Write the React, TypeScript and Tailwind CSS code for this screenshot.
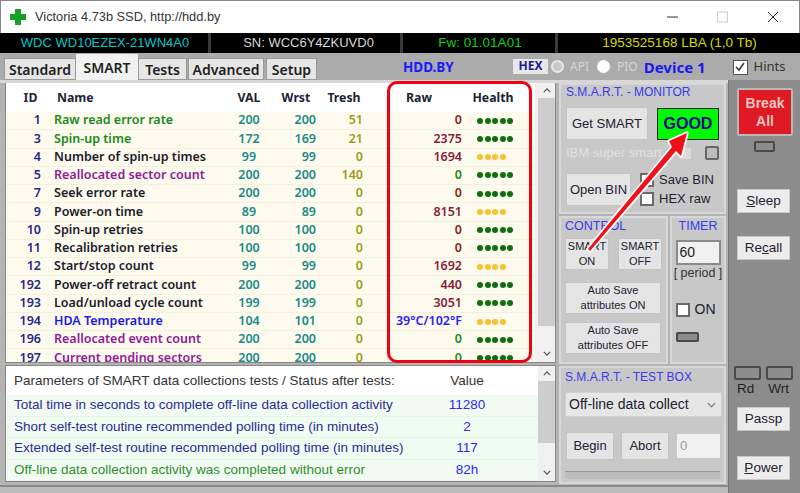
import React from "react";

const rows = [
  { id: 1, name: "Raw read error rate", c: "text-[#1a8a1a]", val: 200, w: 200, t: 51, raw: "0", rc: "text-[#8a1c1c]", ok: true },
  { id: 3, name: "Spin-up time", c: "text-[#1a8a1a]", val: 172, w: 169, t: 21, raw: "2375", rc: "text-[#8a1c3c]", ok: true },
  { id: 4, name: "Number of spin-up times", c: "text-[#1c1c2c]", val: 99, w: 99, t: 0, raw: "1694", rc: "text-[#8a1c3c]", ok: false },
  { id: 5, name: "Reallocated sector count", c: "text-[#8f1a9a]", val: 200, w: 200, t: 140, raw: "0", rc: "text-[#1a8a1a]", ok: true },
  { id: 7, name: "Seek error rate", c: "text-[#1c1c2c]", val: 200, w: 200, t: 0, raw: "0", rc: "text-[#8a1c1c]", ok: true },
  { id: 9, name: "Power-on time", c: "text-[#1c1c2c]", val: 89, w: 89, t: 0, raw: "8151", rc: "text-[#8a1c3c]", ok: false },
  { id: 10, name: "Spin-up retries", c: "text-[#1c1c2c]", val: 100, w: 100, t: 0, raw: "0", rc: "text-[#8a1c1c]", ok: true },
  { id: 11, name: "Recalibration retries", c: "text-[#1c1c2c]", val: 100, w: 100, t: 0, raw: "0", rc: "text-[#8a1c1c]", ok: true },
  { id: 12, name: "Start/stop count", c: "text-[#1c1c2c]", val: 99, w: 99, t: 0, raw: "1692", rc: "text-[#8a1c3c]", ok: false },
  { id: 192, name: "Power-off retract count", c: "text-[#1c1c2c]", val: 200, w: 200, t: 0, raw: "440", rc: "text-[#8a1c3c]", ok: true },
  { id: 193, name: "Load/unload cycle count", c: "text-[#1c1c2c]", val: 199, w: 199, t: 0, raw: "3051", rc: "text-[#8a1c3c]", ok: true },
  { id: 194, name: "HDA Temperature", c: "text-[#1a1aee]", val: 104, w: 101, t: 0, raw: "39°C/102°F", rc: "text-[#2a1aff]", ok: false },
  { id: 196, name: "Reallocated event count", c: "text-[#8f1a9a]", val: 200, w: 200, t: 0, raw: "0", rc: "text-[#1a8a1a]", ok: true },
  { id: 197, name: "Current pending sectors", c: "text-[#8f1a9a]", val: 200, w: 200, t: 0, raw: "0", rc: "text-[#1a8a1a]", ok: true },
];

const tests = [
  { text: "Total time in seconds to complete off-line data collection activity", v: "11280", c: "text-[#2a2a9a]" },
  { text: "Short self-test routine recommended polling time (in minutes)", v: "2", c: "text-[#2a2a9a]" },
  { text: "Extended self-test routine recommended polling time (in minutes)", v: "117", c: "text-[#2a2a9a]" },
  { text: "Off-line data collection activity was completed without error", v: "82h", c: "text-[#2f8f2f]" },
];

function Dots({ ok }: { ok: boolean }) {
  const n = ok ? 5 : 4;
  return (
    <div className="flex gap-[1.5px]">
      {Array.from({ length: n }).map((_, i) => (
        <span key={i} className={ok ? "w-[6px] h-[6px] rounded-full bg-[#0c700c]" : "w-[6px] h-[6px] rounded-full bg-[#fbc02d]"} />
      ))}
    </div>
  );
}

function Scroll({ thumb }: { thumb: string }) {
  return (
    <div className="w-[17px] bg-[#f0f0f0] flex flex-col items-center shrink-0">
      <svg viewBox="0 0 10 6" className="w-[8px] h-[5px] mt-[5px] mb-[5px] shrink-0" fill="none" stroke="#555" strokeWidth="1.6"><path d="M1 5l4-4 4 4" /></svg>
      <div className={`w-full bg-[#cdcdcd] ${thumb}`} />
      <div className="flex-1" />
      <svg viewBox="0 0 10 6" className="w-[8px] h-[5px] mt-[5px] mb-[6px] shrink-0" fill="none" stroke="#555" strokeWidth="1.6"><path d="M1 1l4 4 4-4" /></svg>
    </div>
  );
}

function Btn({ children, className }: { children: React.ReactNode; className: string }) {
  return (
    <div className={`bg-[#e4e4e4] border border-[#c4c4c4] flex items-center justify-center text-center text-[#222230] ${className}`}>
      {children}
    </div>
  );
}

function Side({ children, className }: { children: React.ReactNode; className: string }) {
  return (
    <div className={`bg-[#ececec] border border-[#c8c8c8] w-[53px] h-[24px] ml-[8px] flex items-center justify-center text-[13.5px] text-[#222230] ${className}`}>
      {children}
    </div>
  );
}

function Led({ className }: { className: string }) {
  return <div className={`bg-[#8c8c8c] border-2 border-[#4a4a4a] rounded-[2px] ${className}`} />;
}

function Box({ className }: { className: string }) {
  return <div className={`bg-white border-2 border-[#6a6a6a] shrink-0 ${className}`} />;
}

export default function App() {
  return (
    <div className="relative w-[800px] h-[493px] overflow-hidden bg-[#a6a6a6] font-['Noto_Sans',sans-serif]">
      {/* title bar */}
      <div className="h-[33px] bg-white flex items-center border-t border-[#888] border-l border-r">
        <svg viewBox="0 0 16 16" className="w-[16px] h-[16px] ml-[9px] mb-[1px]"><path d="M5 0h6v5h5v6h-5v5H5v-5H0V5h5z" fill="#16a02a" /></svg>
        <span className="ml-[9px] text-[12.8px] text-[#333] font-['Liberation_Sans',sans-serif]">Victoria 4.73b SSD, http://hdd.by</span>
        <div className="flex-1" />
        <svg viewBox="0 0 112 12" className="w-[112px] h-[12px] mr-[20px]" fill="none">
          <path d="M0 6h11" stroke="#333" strokeWidth="1" />
          <rect x="50.5" y="1" width="10" height="10" stroke="#ccc" />
          <path d="M101 1l10 10M111 1l-10 10" stroke="#333" strokeWidth="1" />
        </svg>
      </div>

      {/* drive info */}
      <div className="h-[20px] bg-black flex text-[13px] leading-[20px] text-center font-['Liberation_Sans',sans-serif]">
        <div className="w-[211px] pl-[2px] text-[#00c8c8] border-r-[3px] border-[#3a3a3a]">WDC WD10EZEX-21WN4A0</div>
        <div className="w-[192px] pl-[6px] text-[#d8d8d8] border-r-[3px] border-[#3a3a3a]">SN: WCC6Y4ZKUVD0</div>
        <div className="w-[155px] text-[13.5px] pl-[2px] text-[#10d010] border-r-[3px] border-[#3a3a3a]">Fw: 01.01A01</div>
        <div className="flex-1 text-[13.5px] pl-[1px] text-[#d8d800]">1953525168 LBA (1,0 Tb)</div>
      </div>

      {/* tabs */}
      <div className="h-[27px] flex items-end pl-[4px] font-['Noto_Sans',sans-serif] font-semibold text-[14px] text-[#222] bg-[#ababab]">
        <div className="w-[72px] h-[22px] bg-[#e6e6e6] border border-[#999] flex items-center justify-center">Standard</div>
        <div className="w-[62px] h-[26px] bg-[#f2f2f2] flex items-center justify-center">SMART</div>
        <div className="w-[49px] h-[22px] bg-[#e6e6e6] border border-[#999] flex items-center justify-center">Tests</div>
        <div className="w-[76px] h-[22px] ml-[1px] bg-[#e6e6e6] border border-[#999] flex items-center justify-center">Advanced</div>
        <div className="w-[51px] h-[22px] ml-[2px] bg-[#e6e6e6] border border-[#999] flex items-center justify-center">Setup</div>
        <div className="w-[85px] h-[26px] ml-[85px] flex items-center text-[#1a1aff] text-[13.5px] font-bold pl-[1px]">HDD.BY</div>
        <div className="h-[26px] ml-[26px] flex items-center">
          <div className="w-[35px] h-[15px] mb-[2px] bg-[#e8e8e8] text-[#1a1a9a] text-[12px] font-bold flex items-center justify-center">HEX</div>
          <span className="w-[13px] h-[13px] rounded-full bg-[#c8c8c8] border-2 border-[#e8e8e8] ml-[3px] mb-[2px]" />
          <span className="ml-[6px] text-[12px] text-[#d4d4d4] font-normal">API</span>
          <span className="w-[13px] h-[13px] rounded-full bg-white ml-[8px] mb-[2px]" />
          <span className="ml-[7px] text-[12px] text-[#d4d4d4] font-normal">PIO</span>
          <span className="ml-[6px] text-[#1a1aee] text-[15px] font-bold">Device 1</span>
        </div>
        <div className="h-[26px] ml-[27px] flex items-center font-normal text-[13px]">
          <div className="w-[15px] h-[15px] bg-white border border-[#555] flex items-center justify-center">
            <svg viewBox="0 0 12 12" className="w-[12px] h-[12px]" fill="none" stroke="#333" strokeWidth="1.5"><path d="M2 6l3 3 5-7" /></svg>
          </div>
          <span className="ml-[6px] text-[#333]">Hints</span>
        </div>
      </div>

      {/* body */}
      <div className="flex h-[413px]">
        <div className="w-[728px] flex flex-col bg-[#b4b4b4] border-t-[3px] border-[#d8d8d8] pl-[4px]">
          <div className="flex flex-1 gap-[3px]">
            {/* left tables */}
            <div className="w-[552px] flex flex-col gap-[2px] pl-[1px]">
              <div className="h-[280px] flex border border-[#888] border-t-0">
                <div className="flex-1 bg-white overflow-hidden font-semibold text-[12.5px]">
                  <div className="h-[29px] pt-[1px] flex items-center text-[#222238] text-[12.3px] font-bold">
                    <div className="w-[49px] text-center">ID</div>
                    <div className="w-[171px] pl-[2px]">Name</div>
                    <div className="w-[46px] text-center">VAL</div>
                    <div className="w-[48px] text-center">Wrst</div>
                    <div className="w-[48px] text-center">Tresh</div>
                    <div className="w-[12px]" />
                    <div className="w-[78px] text-center">Raw</div>
                    <div className="w-[70px] text-center">Health</div>
                  </div>
                  {rows.map((r) => (
                    <div key={r.id} className="h-[18.27px] flex items-center bg-[#fdfbee] border-b border-[#f3f0e0]">
                      <div className="w-[35px] text-right text-[#26268c]">{r.id}</div>
                      <div className={`w-[185px] pl-[13px] whitespace-nowrap ${r.c}`}>{r.name}</div>
                      <div className="w-[46px] text-center text-[#1a8a8a]">{r.val}</div>
                      <div className="w-[44px] text-right text-[#1a8a8a]">{r.w}</div>
                      <div className="w-[47px] text-right text-[#a09a1a]">{r.t}</div>
                      <div className="w-[99px] text-right whitespace-nowrap">
                        <span className={r.rc}>{r.raw}</span>
                      </div>
                      <div className="w-[60px] pl-[15px]"><Dots ok={r.ok} /></div>
                    </div>
                  ))}
                </div>
                <div className="w-[3px] bg-[#f0f0f0]" />
                <Scroll thumb="h-[228px]" />
              </div>
              <div className="h-[117px] flex border border-[#888] bg-white">
                <div className="flex-1 text-[13.5px] font-['Liberation_Sans',sans-serif] whitespace-nowrap">
                  <div className="h-[29px] pt-[3px] flex items-center text-[#333] border-b border-white">
                    <div className="w-[419px] pl-[8px]">Parameters of SMART data collections tests / Status after tests:</div>
                    <div className="w-[84px] text-center">Value</div>
                  </div>
                  {tests.map((t) => (
                    <div key={t.v} className="h-[21.5px] flex items-center bg-[#f1fbf1] border-b border-[#e4f4e4]">
                      <div className={`w-[419px] pl-[8px] ${t.c}`}>{t.text}</div>
                      <div className="w-[84px] text-center text-[#2a2aff]">{t.v}</div>
                    </div>
                  ))}
                </div>
                <Scroll thumb="h-[62px]" />
              </div>
            </div>

            {/* middle panels */}
            <div className="w-[167px] flex flex-col gap-[2px] font-['Liberation_Sans',sans-serif]">
              <div className="h-[131px] bg-[#c8c8c8] border-2 border-[#d8d8d8] px-[5px]">
                <div className="text-[#3a3aee] text-[12px] h-[21px] leading-[15px] pt-0">S.M.A.R.T. - MONITOR</div>
                <div className="flex items-center mt-[1px]">
                  <Btn className="w-[83px] h-[33px] text-[13px]">Get SMART</Btn>
                  <div className="w-[63px] h-[32px] ml-[9px] bg-[#00f800] border border-[#222] flex items-center justify-center text-[#0a0a8a] text-[16px] font-bold">GOOD</div>
                </div>
                <div className="flex items-center h-[18px] mt-[4px]">
                  <span className="text-[13px] text-[#e0e0e0] whitespace-nowrap w-[115px]">IBM super smart</span>
                  <div className="w-[11px] h-[11px] bg-[#dcdcdc]" />
                  <div className="w-[14px] h-[14px] ml-[14px] bg-[#bdbdbd] border-2 border-[#666] rounded-[2px]" />
                </div>
                <div className="flex mt-[11px]">
                  <Btn className="w-[65px] h-[33px] text-[13px]">Open BIN</Btn>
                  <div className="ml-[9px] flex flex-col gap-[5px] text-[13px] leading-[14px] text-[#222230]">
                    <div className="flex items-center gap-[5px]"><Box className="w-[14px] h-[14px]" />Save BIN</div>
                    <div className="flex items-center gap-[5px]"><Box className="w-[14px] h-[14px]" />HEX raw</div>
                  </div>
                </div>
              </div>
              <div className="h-[148px] flex gap-[2px]">
                <div className="w-[109px] bg-[#c8c8c8] border-2 border-[#d8d8d8] px-[4px] text-[11px]">
                  <div className="text-[#3a3aee] text-[12.5px] h-[20px] leading-[15px] pt-[1px]">CONTROL</div>
                  <div className="flex justify-between">
                    <Btn className="w-[44px] h-[32px] leading-[15px] bg-[#dedede]">SMART ON</Btn>
                    <Btn className="w-[44px] h-[32px] leading-[15px] bg-[#dedede]">SMART OFF</Btn>
                  </div>
                  <Btn className="w-[96px] h-[32px] mt-[12px] leading-[15px]">Auto Save attributes ON</Btn>
                  <Btn className="w-[96px] h-[32px] mt-[8px] leading-[15px]">Auto Save attributes OFF</Btn>
                </div>
                <div className="flex-1 bg-[#c8c8c8] border-2 border-[#d8d8d8] flex flex-col items-center">
                  <div className="text-[#3a3aee] text-[12.5px] h-[22px] leading-[15px] pt-[1px]">TIMER</div>
                  <div className="w-[45px] h-[25px] bg-[#f0f0f0] border-2 border-[#8a8a8a] text-[14px] text-[#222] leading-[21px] pl-[2px]">60</div>
                  <div className="text-[12.5px] text-[#333] leading-[15px] mt-[1px] whitespace-nowrap">[ period ]</div>
                  <div className="flex items-center w-[45px] mt-[18px] text-[14px] text-[#222230]">
                    <Box className="w-[14px] h-[14px]" />
                    <span className="ml-[5px]">ON</span>
                  </div>
                  <div className="w-[45px] mt-[12px]"><Led className="w-[23px] h-[10px]" /></div>
                </div>
              </div>
              <div className="h-[118px] bg-[#c8c8c8] border-2 border-[#d8d8d8] px-[4px]">
                <div className="text-[#3a3aee] text-[12px] h-[24px] leading-[15px] pt-[2px]">S.M.A.R.T. - TEST BOX</div>
                <div className="h-[25px] bg-[#e6e6e6] border border-[#d0d0d0] flex items-center text-[14px] text-[#222230] w-[157px]">
                  <span className="pl-[3px] flex-1">Off-line data collect</span>
                  <svg viewBox="0 0 10 6" className="w-[9px] h-[6px] mr-[5px]" fill="none" stroke="#666" strokeWidth="1.2"><path d="M1 1l4 4 4-4" /></svg>
                </div>
                <div className="flex items-center mt-[15px] text-[13px]">
                  <Btn className="w-[48px] h-[28px] ml-[1px]">Begin</Btn>
                  <Btn className="w-[48px] h-[28px] ml-[7px]">Abort</Btn>
                  <div className="w-[43px] h-[24px] ml-[8px] bg-[#f0f0f0] text-[#999] leading-[24px] pl-[3px]">0</div>
                </div>
                <div className="h-[8px] mt-[11px] border-t border-[#999] bg-[#bcbcbc]" />
              </div>
            </div>
          </div>
          <div className="h-[8px] bg-[#bbbbbb] border-t-2 border-[#8a8a8a] -ml-[4px]" />
        </div>

        {/* right column */}
        <div className="flex-1 bg-[#8c8c8c] font-['Liberation_Sans',sans-serif] border-l border-[#777]">
          <div className="w-[56px] h-[48px] ml-[8px] mt-[8px] bg-[#e01a22] border-2 border-[#b8b8b8] rounded-[2px] text-[#f4c4c4] text-[14px] leading-[18px] font-semibold text-center flex items-center justify-center">Break All</div>
          <Led className="w-[21px] h-[11px] ml-[25px] mt-[5px]" />
          <Side className="mt-[37px]"><span><u>S</u>leep</span></Side>
          <Side className="mt-[23px]"><span>Re<u>c</u>all</span></Side>
          <div className="flex ml-[5px] mt-[106px] gap-[5px]">
            <Led className="w-[27px] h-[14px]" />
            <Led className="w-[27px] h-[14px]" />
          </div>
          <div className="flex ml-[8px] text-[13.5px] text-[#222] leading-[16px] gap-[14px] mt-[1px]">
            <span>Rd</span>
            <span>Wrt</span>
          </div>
          <Side className="mt-[10px]">Passp</Side>
          <Side className="mt-[25px]"><span><u>P</u>ower</span></Side>
        </div>
      </div>

      {/* annotation: red frame and arrow */}
      <div className="absolute left-[387px] top-[81px] w-[145px] h-[282px] border-[3px] border-[#f00010] rounded-[10px]" />
      <svg className="absolute left-0 top-0 w-[800px] h-[493px] pointer-events-none" viewBox="0 0 800 493">
        <path d="M588 249L672 147L669 141L687 133L681 156L676 151L590 251z" fill="#fff" stroke="#fff" strokeWidth="3.5" strokeLinejoin="round" />
        <path d="M588 249L672 147L669 141L687 133L681 156L676 151L590 251z" fill="#f0101a" />
      </svg>
    </div>
  );
}
